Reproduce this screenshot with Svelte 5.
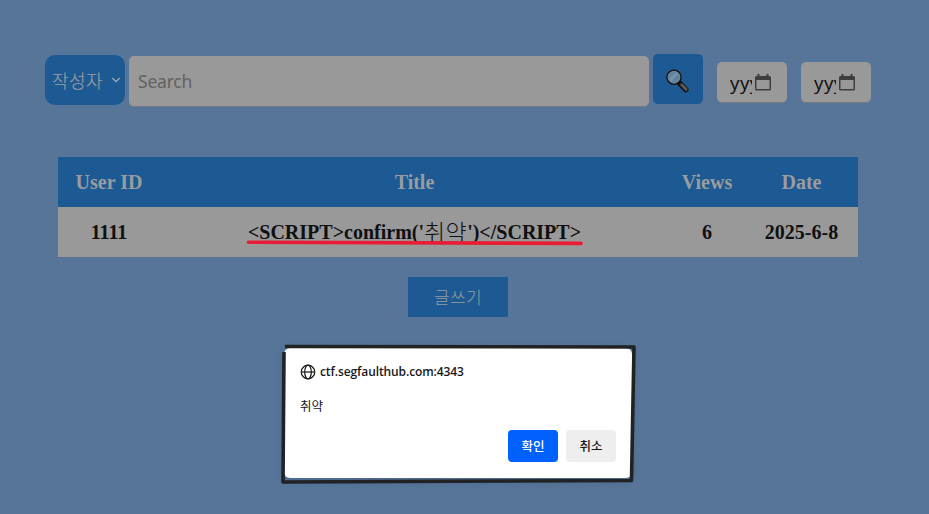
<script>
  const rows = [{ user: '1111', views: '6', date: '2025-6-8' }];
  const dates = ['from', 'to'];
</script>

<div class="page">
  <form class="search">
    <div class="select">
      <span class="author">작성자</span>
      <svg width="10" height="8" viewBox="0 0 10 8"><path d="M1.3 2l3.7 3.7L8.700 2" fill="none" stroke="#a4aab0" stroke-width="1.300" /></svg>
    </div>
    <div class="input"><span>Search</span></div>
    <div class="find">
      <svg width="26" height="26" viewBox="0 0 26 26">
        <path d="M14.600 15.200l6.200 6.400" stroke="#141414" stroke-width="5.400" stroke-linecap="round" />
        <path d="M16.600 16.800l4.300 4.500" stroke="#55504c" stroke-width="3" stroke-linecap="round" />
        <path d="M17.600 17l3.900 4" stroke="#77716c" stroke-width="1" stroke-linecap="round" />
        <circle cx="9" cy="9.200" r="7" fill="#5d819f" stroke="#111518" stroke-width="1.500" />
        <circle cx="9" cy="9.200" r="5.800" fill="none" stroke="#7d8a94" stroke-width="1" />
        <path d="M4.200 10.500l7-6.300 2.300 1.800-7.500 7.400z" fill="#7292ab" />
      </svg>
    </div>
    {#each dates as d (d)}
      <div class="date">
        <span class="yy">yyy</span>
        <svg width="16" height="17" viewBox="0 0 16 17">
          <path d="M2.500 0h2v2h7V0h2v2H14.500q1.500 0 1.500 1.500V15q0 1.500-1.500 1.500h-13Q0 16.500 0 15V3.500Q0 2 1.500 2h1zM1.500 6v9h13V6z" fill="#3e3e3e" fill-rule="evenodd" />
        </svg>
      </div>
    {/each}
  </form>

  <div class="table">
    <div class="row head">
      <div><span>User ID</span></div><div><span>Title</span></div><div><span>Views</span></div><div><span>Date</span></div>
    </div>
    {#each rows as r (r.user)}
      <div class="row">
        <div><span>{r.user}</span></div>
        <div class="title">
          <span>{"<SCRIPT>confirm('"}</span><span class="ko">취약</span><span>{"')</SCRIPT>"}</span>
          <svg class="mark" width="338" height="8" viewBox="0 0 338 8"><path d="M2.500 3.200L335 4.400" stroke="#e81c34" stroke-width="3.600" stroke-linecap="round" /></svg>
        </div>
        <div><span>{r.views}</span></div>
        <div><span>{r.date}</span></div>
      </div>
    {/each}
  </div>

  <div class="write"><span>글쓰기</span></div>

  <div class="dialog">
    <svg class="frame" width="358" height="144" viewBox="0 0 358 144">
      <path d="M5 4.500L354 5L351.500 138.500L3 140L4 10" fill="none" stroke="#202223" stroke-width="3.600" stroke-linejoin="round" />
    </svg>
    <div class="origin">
      <svg width="16" height="16" viewBox="0 0 16 16" fill="none" stroke="#1d1d22" stroke-width="1.250">
        <circle cx="8" cy="8" r="6.800" /><ellipse cx="8" cy="8" rx="3.300" ry="6.800" /><path d="M1.200 8h13.600" />
      </svg>
      <span>ctf.segfaulthub.com:4343</span>
    </div>
    <div class="message">취약</div>
    <div class="actions"><div class="ok">확인</div><div class="cancel">취소</div></div>
  </div>
</div>

<style>
  :global(body) { margin: 0; background: #577598; }
  .page { width: 929px; height: 514px; overflow: hidden; position: relative; box-sizing: border-box; padding-top: 54px; background: #577598; font-family: "Open Sans", "Noto Sans CJK KR", sans-serif; }
  .search { display: flex; align-items: flex-start; margin-left: 45px; height: 103px; }
  .select { width: 80px; height: 50px; margin-top: 1px; box-sizing: border-box; background: #1d5992; border-radius: 10px; color: #999ca0; display: flex; align-items: center; padding: 0 4px 0 7px; justify-content: space-between; }
  .author { font: 300 18px/26px "Noto Sans CJK KR", sans-serif; letter-spacing: .4px; -webkit-text-stroke: .2px #999ca0; }
  .input { width: 520px; height: 51px; margin: 2px 4px 0; box-sizing: border-box; background: #999; border-radius: 5px; border-bottom: 1px solid #767b82; color: #626262; font: 17.500px/50px "Noto Sans", sans-serif; letter-spacing: -.2px; padding-left: 9px; }
  .find { width: 50px; height: 50px; border-radius: 5px; background: #1d5992; box-sizing: border-box; padding: 14px 0 0 12px; }
  .find svg { display: block; }
  .date { width: 70px; height: 41px; margin: 8px 0 0 14px; box-sizing: border-box; background: #999; border-radius: 5px; border-bottom: 1px solid #767b82; display: flex; padding: 0 16px 0 13px; align-items: center; justify-content: space-between; }
  .yy { width: 22px; overflow: hidden; font: 18.500px/26px "Noto Sans", sans-serif; letter-spacing: .500px; color: #111; margin-top: 2px; }
  .table { width: 800px; margin-left: 58px; font: bold 20px/50px "Liberation Serif", serif; }
  .row { height: 50px; display: grid; grid-template-columns: 102px 509px 76px 113px; background: #999; color: #101012; text-align: center; white-space: nowrap; }
  .row > div { height: 50px; }
  .head { background: #1d5992; color: #999ca0; }
  .title { position: relative; display: flex; justify-content: center; }
  .ko { font: 300 23px/48px "Noto Sans CJK KR", sans-serif; letter-spacing: .4px; }
  .mark { position: absolute; left: 86px; top: 32px; }
  .write { width: 100px; height: 40px; margin: 20px 0 0 408px; background: #1d5992; color: #999ca0; text-align: center; font: 300 17px/39px "Noto Sans CJK KR", sans-serif; letter-spacing: .4px; }
  .dialog { position: absolute; left: 284px; top: 348px; width: 348px; height: 130px; box-sizing: border-box; background: #fff; border-radius: 6px; padding: 16px 16px 16px 17px; color: #18181d; box-shadow: 0 2px 8px rgba(30, 55, 85, .25); }
  .frame { position: absolute; left: -4px; top: -6px; }
  .origin { position: relative; display: flex; gap: 4px; align-items: center; height: 16px; margin-left: -1px; font: 600 12px/16px "Open Sans", sans-serif; letter-spacing: -.1px; }
  .message { font: 12.500px/18px "Noto Sans CJK KR", sans-serif; margin-top: 17px; margin-left: -1px; }
  .actions { display: flex; justify-content: flex-end; gap: 8px; margin-top: 15px; font: 500 12.500px/32px "Noto Sans CJK KR", sans-serif; text-align: center; }
  .actions > div { width: 50px; height: 32px; border-radius: 4px; }
  .ok { background: #0061ff; color: #fff; }
  .cancel { background: #eee; }
</style>
